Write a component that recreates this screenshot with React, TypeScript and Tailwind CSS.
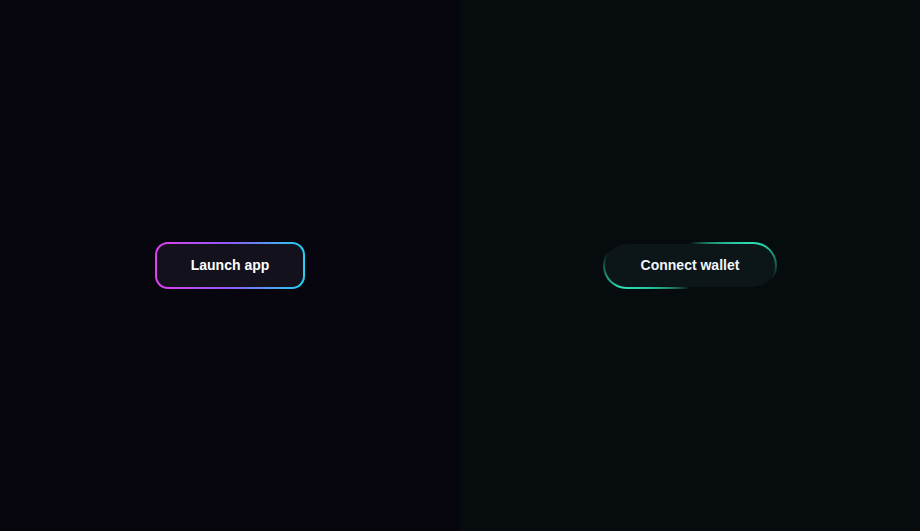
export default function App() {
  return (
    <div className="grid h-[531px] w-full grid-cols-2 font-['Liberation_Sans',Arial,sans-serif]">
      <section className="flex items-center justify-center bg-[#07060f]">
        <button className="rounded-[13px] bg-[linear-gradient(90deg,#e23ff0,#8b5cf6_50%,#22d3ee)] p-[2px]">
          <span className="flex h-[43px] w-[146px] items-center justify-center rounded-[11px] bg-[#12111c] text-[14px] font-bold text-white">
            Launch app
          </span>
        </button>
      </section>
      <section className="flex items-center justify-center bg-[#060b0d]">
        <button className="rounded-full bg-[conic-gradient(from_0deg,transparent_0deg,#2ee0b4_72deg,transparent_100deg,transparent_180deg,#2ee0b4_252deg,transparent_280deg)] p-[2px]">
          <span className="flex h-[43px] w-[170px] items-center justify-center rounded-full bg-[#0c1517] text-[14px] font-bold text-[#f1f5f9]">
            Connect wallet
          </span>
        </button>
      </section>
    </div>
  )
}
